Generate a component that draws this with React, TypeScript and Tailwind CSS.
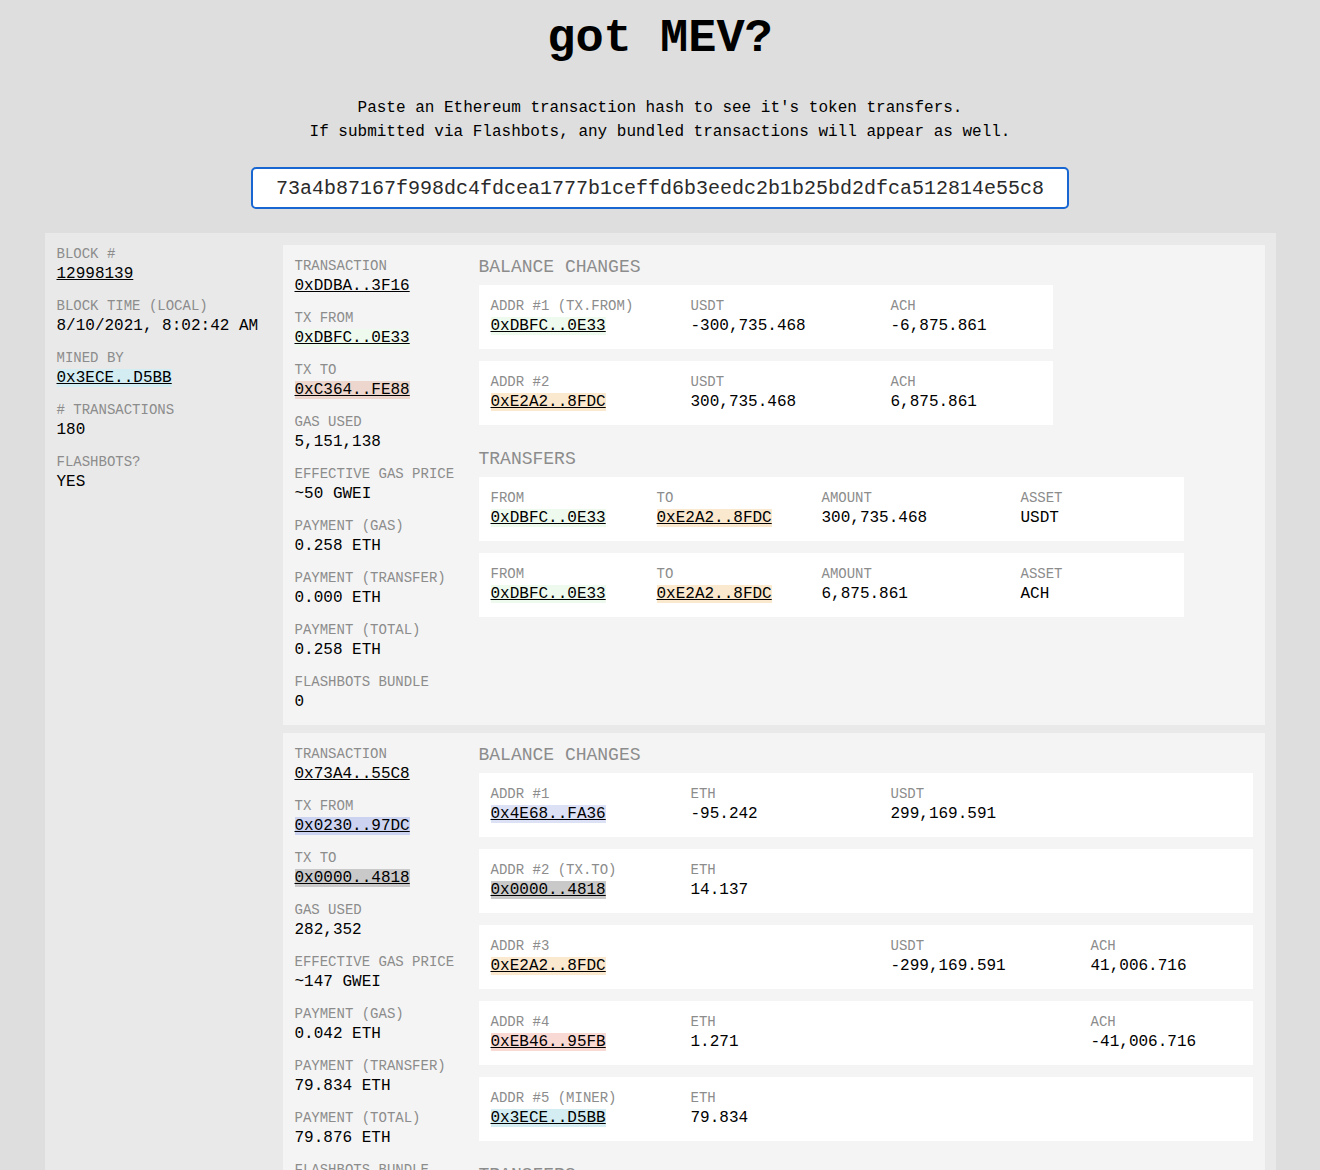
import React from "react";

// address highlight colours, keyed by address
const tint: Record<string, string> = {
  "0xDBFC..0E33": "bg-[#effaef]",
  "0xC364..FE88": "bg-[#ecd6cd]",
  "0x3ECE..D5BB": "bg-[#d3edf3]",
  "0xE2A2..8FDC": "bg-[#fbe9cf]",
  "0x0230..97DC": "bg-[#ccd3f0]",
  "0x0000..4818": "bg-[#c9c9c9]",
  "0x4E68..FA36": "bg-[#dde1f6]",
  "0xEB46..95FB": "bg-[#f9d9d4]",
};

type Field = { label: string; value: string; addr?: boolean };

interface Tx {
  fields: Field[];
  balances: Array<{ label: string; addr: string; cells: Array<[string, string] | null> }>;
  transfers: Array<{ from: string; to: string; amount: string; asset: string }>;
}

const block: Field[] = [
  { label: "BLOCK #", value: "12998139", addr: true },
  { label: "BLOCK TIME (LOCAL)", value: "8/10/2021, 8:02:42 AM" },
  { label: "MINED BY", value: "0x3ECE..D5BB", addr: true },
  { label: "# TRANSACTIONS", value: "180" },
  { label: "FLASHBOTS?", value: "YES" },
];

const txs: Tx[] = [
  {
    fields: [
      { label: "TRANSACTION", value: "0xDDBA..3F16", addr: true },
      { label: "TX FROM", value: "0xDBFC..0E33", addr: true },
      { label: "TX TO", value: "0xC364..FE88", addr: true },
      { label: "GAS USED", value: "5,151,138" },
      { label: "EFFECTIVE GAS PRICE", value: "~50 GWEI" },
      { label: "PAYMENT (GAS)", value: "0.258 ETH" },
      { label: "PAYMENT (TRANSFER)", value: "0.000 ETH" },
      { label: "PAYMENT (TOTAL)", value: "0.258 ETH" },
      { label: "FLASHBOTS BUNDLE", value: "0" },
    ],
    balances: [
      { label: "ADDR #1 (TX.FROM)", addr: "0xDBFC..0E33", cells: [["USDT", "-300,735.468"], ["ACH", "-6,875.861"]] },
      { label: "ADDR #2", addr: "0xE2A2..8FDC", cells: [["USDT", "300,735.468"], ["ACH", "6,875.861"]] },
    ],
    transfers: [
      { from: "0xDBFC..0E33", to: "0xE2A2..8FDC", amount: "300,735.468", asset: "USDT" },
      { from: "0xDBFC..0E33", to: "0xE2A2..8FDC", amount: "6,875.861", asset: "ACH" },
    ],
  },
  {
    fields: [
      { label: "TRANSACTION", value: "0x73A4..55C8", addr: true },
      { label: "TX FROM", value: "0x0230..97DC", addr: true },
      { label: "TX TO", value: "0x0000..4818", addr: true },
      { label: "GAS USED", value: "282,352" },
      { label: "EFFECTIVE GAS PRICE", value: "~147 GWEI" },
      { label: "PAYMENT (GAS)", value: "0.042 ETH" },
      { label: "PAYMENT (TRANSFER)", value: "79.834 ETH" },
      { label: "PAYMENT (TOTAL)", value: "79.876 ETH" },
      { label: "FLASHBOTS BUNDLE", value: "0" },
    ],
    balances: [
      { label: "ADDR #1", addr: "0x4E68..FA36", cells: [["ETH", "-95.242"], ["USDT", "299,169.591"], null] },
      { label: "ADDR #2 (TX.TO)", addr: "0x0000..4818", cells: [["ETH", "14.137"], null, null] },
      { label: "ADDR #3", addr: "0xE2A2..8FDC", cells: [null, ["USDT", "-299,169.591"], ["ACH", "41,006.716"]] },
      { label: "ADDR #4", addr: "0xEB46..95FB", cells: [["ETH", "1.271"], null, ["ACH", "-41,006.716"]] },
      { label: "ADDR #5 (MINER)", addr: "0x3ECE..D5BB", cells: [["ETH", "79.834"], null, null] },
    ],
    transfers: [
      { from: "0x4E68..FA36", to: "0x0000..4818", amount: "95.242", asset: "ETH" },
      { from: "0xE2A2..8FDC", to: "0x4E68..FA36", amount: "299,169.591", asset: "USDT" },
    ],
  },
];

function Addr({ value }: { value: string }) {
  return <a href="#" className={`text-black underline ${tint[value] ?? ""}`}>{value}</a>;
}

function Item({ label, value, addr }: Field) {
  return (
    <div className="flex flex-col">
      <div className="text-[14px] leading-[18px] text-[#8c8c8c]">{label}</div>
      <div className="text-[16px] leading-[22px] text-black">{addr ? <Addr value={value} /> : value}</div>
    </div>
  );
}

function TxPanel({ tx }: { tx: Tx }) {
  return (
    <div className="flex gap-3 bg-[#f4f4f4] p-3">
      <div className="flex w-[172px] shrink-0 flex-col gap-3">
        {tx.fields.map((f) => (
          <Item key={f.label} {...f} />
        ))}
      </div>
      <div className="flex flex-1 flex-col items-start">
        <div className="mb-2 text-[18px] leading-[20px] text-[#8c8c8c]">BALANCE CHANGES</div>
        <div className="flex flex-col gap-3">
          {tx.balances.map((b) => (
            <div key={b.label} className="flex w-fit gap-[50px] bg-white p-3">
              <div className="w-[150px]">
                <Item label={b.label} value={b.addr} addr />
              </div>
              {b.cells.map((c, i) => (
                <div key={i} className="w-[150px]">
                  {c && <Item label={c[0]} value={c[1]} />}
                </div>
              ))}
            </div>
          ))}
        </div>
        <div className="mb-2 mt-6 text-[18px] leading-[20px] text-[#8c8c8c]">TRANSFERS</div>
        <div className="flex flex-col gap-3">
          {tx.transfers.map((t, i) => (
            <div key={i} className="flex w-fit bg-white p-3">
              <div className="w-[166px]"><Item label="FROM" value={t.from} addr /></div>
              <div className="w-[165px]"><Item label="TO" value={t.to} addr /></div>
              <div className="w-[199px]"><Item label="AMOUNT" value={t.amount} /></div>
              <div className="w-[151px]"><Item label="ASSET" value={t.asset} /></div>
            </div>
          ))}
        </div>
      </div>
    </div>
  );
}

export default function App() {
  return (
    <div className="min-h-screen bg-[#dedede] pb-10 font-['Liberation_Mono',monospace] text-black">
      <h1 className="pt-[11px] text-center text-[47px] font-bold leading-[56px]">got MEV?</h1>
      <div className="mt-[29px] text-center text-[16px] leading-[24px]">
        <p>Paste an Ethereum transaction hash to see it's token transfers.</p>
        <p>If submitted via Flashbots, any bundled transactions will appear as well.</p>
      </div>
      <div className="mt-[23px] flex justify-center">
        <input
          readOnly
          value="73a4b87167f998dc4fdcea1777b1ceffd6b3eedc2b1b25bd2dfca512814e55c8"
          className="h-[42px] w-[818px] rounded-[5px] border-2 border-[#1766d1] bg-white text-center text-[20px] text-[#2a2a2a] outline-none"
        />
      </div>
      <div className="mx-auto mt-6 flex w-[1231px] bg-[#e9e9e9] p-3">
        <div className="flex w-[226px] shrink-0 flex-col gap-3">
          {block.map((f) => (
            <Item key={f.label} {...f} />
          ))}
        </div>
        <div className="flex flex-1 flex-col gap-2">
          {txs.map((tx, i) => (
            <TxPanel key={i} tx={tx} />
          ))}
        </div>
      </div>
    </div>
  );
}
